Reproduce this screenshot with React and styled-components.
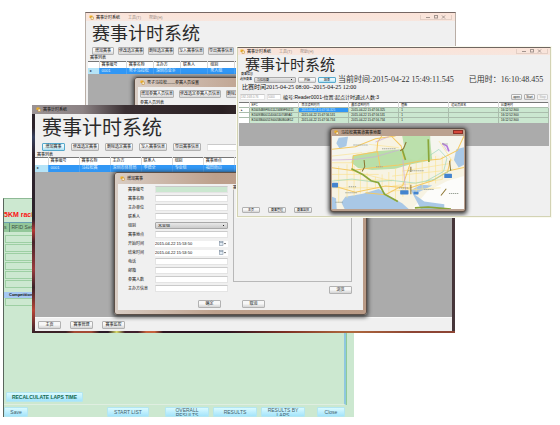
import React from "react";
import styled, { createGlobalStyle, css } from "styled-components";

const GlobalStyle = createGlobalStyle`
  * { box-sizing: border-box; }
  html, body { margin: 0; background: #fff; }
  body { font-family: "Liberation Sans", "Noto Sans CJK SC", sans-serif; font-size: 4px; line-height: 5px; color: #0c0c0c; }
  button, input, select { font: inherit; color: inherit; margin: 0; padding: 0; min-width: 0; }
  h1, h2, p { margin: 0; font-weight: 400; }
`;

const Desktop = styled.main`
  position: relative;
  min-height: 100vh;
  overflow: hidden;
`;

/* ---------- window chrome ---------- */

const Frame = styled.section`
  position: absolute;
  display: flex;
  flex-direction: column;
  overflow: hidden;
  background: #f0f0f0;
`;

const BackWindow = styled(Frame)`
  left: 85px;
  right: 104px;
  top: 12px;
  height: 96px;
  border: 1px solid #b9aea6;
  border-top-color: #766763;
  padding: 0 2px;
`;

const FrontWindow = styled(Frame)`
  left: 32px;
  right: 105px;
  top: 105px;
  height: 228px;
  padding: 0 3px 2px;
  background:
    linear-gradient(90deg, #3a2226 0 8%, #a34a34 10% 14%, #2b1b26 16% 18%, #d9dc6a 20%, #40202c 22% 25%, #c5613c 27% 29%, #2c1420 31% 46%, #7d3024 60%, #b06a3e 75%, #8d4534 90%) bottom / 100% 2px no-repeat,
    linear-gradient(180deg, #2b222a 0 10%, #37415e 14%, #2c222b 22% 50%, #b53733 55%, #47232a 60%, #9a3a3c 72%, #3b2228 80%, #b84436 90%, #37222a) left / 3px 100% no-repeat,
    #46363a;
`;

const RaceWindow = styled(Frame)`
  left: 237px;
  right: 9px;
  top: 47px;
  height: 170px;
  border: 1px solid #d3d3b4;
  border-top-color: #6f6660;
  padding: 0 1px;
  box-shadow: 0 0 0 1px #fafaf0;
`;

const TitleBar = styled.header`
  display: flex;
  align-items: center;
  gap: 2px;
  height: ${(p) => p.$h}px;
  flex: none;
  margin: 0 -3px;
  padding: 0 4px;
  background: ${(p) => (p.$dark ? "linear-gradient(90deg, #9a9294 0, #8b8284 12%, #3b3033 22%, #2a2023 45%, #3a2e30 52%, #241b1e)" : "linear-gradient(#fbe3d8, #f7e6de)")};
  white-space: nowrap;
`;

const Faint = styled.span`
  margin-left: 6px;
  color: #a08f88;
`;

const WindowButtons = styled.span`
  display: flex;
  align-items: center;
  gap: 4px;
  margin-left: auto;
  padding: 0 4px;
  border: 1px solid #e3cfc5;
  border-top: 0;
  color: #8d817c;
`;

const Client = styled.div`
  display: flex;
  flex: 1;
  flex-direction: column;
  min-height: 0;
  background: #f0f0f0;
`;

const Heading = styled.h1`
  font-family: "Noto Sans CJK SC", sans-serif;
  font-weight: 400;
  font-size: ${(p) => p.$size}px;
  line-height: ${(p) => p.$lh}px;
  padding-left: ${(p) => p.$pad}px;
  color: #2a2a2a;
  white-space: nowrap;
`;

const Toolbar = styled.div`
  display: flex;
  flex: none;
  align-items: center;
  gap: ${(p) => p.$gap}px;
  padding: ${(p) => p.$pad};
`;

const Button = styled.button`
  flex: none;
  width: ${(p) => p.$w}px;
  height: ${(p) => p.$h || 8}px;
  border: 1px solid #b2b2b2;
  border-radius: 1px;
  background: linear-gradient(#f7f7f7 45%, #d4d4d4);
  font-size: ${(p) => p.$fs || 4}px;
  line-height: 4px;
  text-align: center;
  white-space: nowrap;
  ${(p) => p.$active && css`border-color: #56a9cc; background: linear-gradient(#e9f7fc 45%, #a9def2);`}
  ${(p) => p.disabled && css`border-color: #d0d0d0; background: #f4f4f4; color: #aaa;`}
`;

const ListLabel = styled.h2`
  flex: none;
  font-size: ${(p) => p.$fs || 4}px;
  line-height: ${(p) => p.$lh}px;
  padding-left: 2px;
`;

const Workspace = styled.div`
  flex: ${(p) => (p.$h ? "none" : 1)};
  ${(p) => p.$h && css`height: ${p.$h}px;`}
  background: #ababab;
`;

const DataTable = styled.table`
  flex: none;
  width: 100%;
  table-layout: fixed;
  border-collapse: collapse;
  border-top: 1px solid #777;
  font-size: ${(p) => p.$fs || 4}px;
  line-height: 4px;
  background: #fff;
  th, td {
    height: ${(p) => p.$rh}px;
    padding: 0 2px;
    text-align: left;
    font-weight: 400;
    white-space: nowrap;
    border-right: 1px solid #d8d8d8;
  }
  th:first-child { width: ${(p) => p.$lead}px; }
`;

const SelectedRow = styled.tr`
  background: #3197f5;
  color: #e0f3ff;
  td { border-right-color: #4ba4f6; }
  td:first-child { background: #b5e4f8; color: #234; }
`;

const ReaderRow = styled.tr`
  background: #cbe7d0;
  border-top: 1px solid #aabdac;
  td { border-right-color: #aabdac; }
  td:first-child { background: #fff; }
`;

const PickedCell = styled.td`
  background: ${(p) => (p.$on ? "#3197f5" : "transparent")};
  color: ${(p) => (p.$on ? "#d5ecff" : "inherit")};
`;

const FooterBar = styled.footer`
  display: flex;
  flex: none;
  align-items: center;
  gap: ${(p) => p.$gap}px;
  height: 14px;
  padding-left: 3px;
  border-top: 1px solid #fafafa;
  background: #f0f0f0;
`;

const TextBox = styled.input`
  width: ${(p) => p.$w}px;
  height: ${(p) => p.$h || 7}px;
  border: 1px solid #e4e4e4;
  border-top-color: #cacaca;
  background: ${(p) => (p.$green ? "#cbe7d0" : "#fff")};
  color: ${(p) => (p.disabled ? "#999" : "#222")};
  font-size: ${(p) => p.$fs || 4}px;
`;

const Select = styled.select`
  appearance: none;
  width: ${(p) => p.$w}px;
  height: ${(p) => p.$h || 7}px;
  padding: 0 2px;
  border: 1px solid #a8a8a8;
  border-radius: 1px;
  font-size: ${(p) => p.$fs || 4}px;
  line-height: 4px;
  background:
    linear-gradient(135deg, #222 50%, transparent 50%) right 2px center / 2px 2px no-repeat,
    linear-gradient(#e8e8e8, #cbcbcb);
`;

/* ---------- dialogs ---------- */

const Dialog = styled.div`
  position: absolute;
  display: flex;
  flex-direction: column;
  padding: 0 3px 4px;
  border: 1px solid #5d5048;
  border-radius: 3px;
  background: linear-gradient(90deg, #d9cdc4, #bda08c 40%, #b99a86);
  box-shadow: 0 1px 4px 1px #333;
`;

const StaffDialog = styled(Dialog)`
  left: 48px;
  right: 20px;
  top: 64px;
  height: 60px;
`;

const AddDialog = styled(Dialog)`
  left: 82px;
  right: 88px;
  top: 67px;
`;

const MapDialog = styled(Dialog)`
  left: 92px;
  right: 84px;
  top: 80px;
  padding: 0 1px 2px;
  background: #baa18f;
`;

const DialogTitle = styled.div`
  display: flex;
  align-items: center;
  gap: 2px;
  height: ${(p) => p.$h}px;
  flex: none;
  padding-left: 2px;
  font-size: 4px;
  white-space: nowrap;
`;

const CloseBox = styled.button`
  width: 10px;
  height: 4px;
  margin: 0 1px 2px auto;
  border: 1px solid #8b2f28;
  background: #d5483b;
`;

const DialogBody = styled.div`
  display: grid;
  grid-template-columns: 105px 1fr;
  flex: 1;
  padding: 1px 11px 2px 10px;
  background: #f0f0f0;
`;

const StaffBody = styled(Client)`
  gap: 1px;
`;

const Form = styled.form`
  display: flex;
  flex-direction: column;
`;

const Field = styled.div`
  display: grid;
  grid-template-columns: 27px 73px;
  align-items: center;
  height: 9px;
`;

const DateBox = styled.div`
  display: flex;
  align-items: center;
  background: #fff;
  height: 6px;
  padding-right: 2px;
`;

const DateInput = styled.input`
  flex: 1;
  border: 0;
  background: transparent;
  height: 5px;
`;

const FormActions = styled.div`
  display: flex;
  grid-column: 1 / -1;
  gap: 21px;
  padding: 6px 0 0 70px;
`;

const Side = styled.div`
  display: flex;
  flex-direction: column;
  align-items: flex-end;
  gap: 4px;
`;

const Group = styled.fieldset`
  width: 100%;
  height: 97px;
  margin: 0;
  padding: 0;
  min-width: 0;
  border: 1px solid #b8b8b8;
  legend { padding: 0; margin-left: -1px; line-height: 5px; }
`;

/* ---------- race monitor ---------- */

const RaceRow = styled.div`
  display: flex;
  flex: none;
  align-items: center;
  gap: 2px;
  height: ${(p) => p.$h}px;
  padding: 0 1px;
  white-space: nowrap;
  font-size: 3px;
`;

const Clock = styled.time`
  font-family: "Liberation Serif", "Noto Sans CJK SC", serif;
  font-size: 8px;
  line-height: 9px;
  color: #333;
  margin-left: ${(p) => p.$ml}px;
`;

const Schedule = styled.p`
  font-family: "Liberation Serif", "Noto Sans CJK SC", serif;
  flex: none;
  font-size: 6px;
  line-height: 8px;
  padding-left: 3px;
  white-space: nowrap;
`;

const ReaderInfo = styled.span`
  flex: 1;
  font-size: 5px;
  line-height: 6px;
`;

const RaceFooter = styled.footer`
  display: flex;
  gap: 8px;
  margin-top: auto;
  padding: 0 0 3px 3px;
`;

const MapSvg = styled.svg`
  display: block;
  width: 100%;
  height: auto;
`;

/* ---------- lap results ---------- */

const LapWindow = styled(Frame)`
  left: 3px;
  right: 206px;
  top: 198px;
  height: 219px;
  border-left: 1px solid #59655c;
  border-top: 1px solid #8fba96;
  background: #cce8d0;
`;

const LapTitle = styled.h1`
  color: #fb1111;
  font-weight: 700;
  font-size: 7px;
  line-height: 10px;
  padding-top: 11px;
  height: 23px;
  white-space: nowrap;
`;

const Tabs = styled.nav`
  display: flex;
  flex: none;
  height: 10px;
  margin-bottom: 3px;
  background: #86b98e;
  border-top: 1px solid #6a9fb0;
`;

const Tab = styled.button`
  border: 0;
  border-right: 1px solid #628d78;
  background: #93c79a;
  color: #3c5143;
  font-size: 5px;
  padding: 0 2px 0 ${(p) => p.$pl}px;
`;

const LapLine = styled.div`
  flex: none;
  height: 8px;
  margin: 0 16px 1px 1px;
  border: 1px solid #9dcfa3;
`;

const LapHead = styled.div`
  flex: none;
  height: 6px;
  margin-top: 3px;
  margin-right: 16px;
  padding-left: 5px;
  background: #a5c8f3;
  font-weight: 700;
`;

const LapBody = styled.div`
  display: flex;
  flex-direction: column;
  flex: 1;
  margin-right: 8px;
  border-right: 2px solid #8fc7de;
  border-bottom: 1px solid #dfeee1;
  box-shadow: 1px 0 #8fca98;
`;

const LapSpacer = styled.div`
  flex: 1;
`;

const AquaButton = styled.button`
  flex: none;
  width: ${(p) => p.$w}px;
  height: 10px;
  margin-left: ${(p) => p.$ml || 0}px;
  border: 1px solid #b3e6f1;
  border-radius: 1px;
  background: linear-gradient(#dafaff, #a4e4fb);
  color: ${(p) => (p.$strong ? "#12684f" : "#41606a")};
  font-size: 5px;
  font-weight: ${(p) => (p.$strong ? 700 : 400)};
  line-height: 5px;
  overflow: hidden;
`;

const TwoLine = styled.span`
  display: block;
  height: 8px;
  padding: 0 2px;
  overflow: hidden;
`;

const LapFooter = styled.footer`
  display: flex;
  flex: none;
  height: 12px;
  padding-top: 2px;
`;

const FormIcon = () => (
  <svg width="5" height="5" viewBox="0 0 10 10" aria-hidden="true">
    <rect x="1" y="1" width="6" height="5" fill="#f0b429" />
    <rect x="4" y="4" width="5" height="5" fill="#fff3c4" stroke="#b5792c" />
  </svg>
);

const CalendarIcon = () => (
  <svg width="7" height="5" viewBox="0 0 14 10" aria-hidden="true">
    <rect x="1" y="1" width="7" height="8" fill="#e4edf5" stroke="#6d7f92" />
    <path d="M1 3h7" stroke="#6d7f92" />
    <path d="M10 4h4l-2 3z" fill="#444" />
  </svg>
);

const MinMaxClose = () => (
  <WindowButtons>
    <svg width="22" height="4" viewBox="0 0 22 4" aria-hidden="true" fill="none" stroke="#a3958f">
      <path d="M1 2.5h4M17 .5l3 3m0-3l-3 3" />
      <rect x="9.500" y=".5" width="3" height="2.500" />
    </svg>
  </WindowButtons>
);

function CityMap() {
  return (
    <MapSvg viewBox="0 0 395 219" role="img" aria-label="赛道地图">
      <rect width="395" height="219" fill="#f7f3e3" />
      <path d="M0 0h150l-30 40-60 20-60 20zM280 0h115v50l-60 20-40-30z" fill="#f5f5ef" />
      <path d="M285 165l60-30 50-15v99H240z" fill="#fcfcfa" />
      <path d="M62 58l70-12 78-6 14-28 30-12h38l8 72-70 14-40 12-70 4-42-6-20-16z" fill="#b9dfa8" />
      <path d="M210 0h84v40l-40 34-32-10z" fill="#bbe0ac" />
      <path d="M20 5l28-3-5 28-20 8-10-16zM0 182l12 4 2 33H0zM40 182l52-9 48-14 34 22 36 20 20 18H38l-10-20zM372 40l23-6v52l-16 8-14-22zM236 162l30-16 34 2-24 12-30 14 30 22 60 8v15h-70z" fill="#a9c8e6" />
      <g fill="none" stroke="#fae391" strokeWidth="2">
        <path d="M0 80h60M0 115h140M5 132h180M0 155h150M20 90v110M45 85v100M66 90v90M85 100v72M105 110v60M130 122v36M150 115v45M170 108v70M190 96v100M212 92v90M232 90v70M252 80v90M270 75v85M290 70v80M310 60v82M330 60v70M60 105l120 30M180 120l170-18M180 150l150-20M175 165l150-10M210 105l140-22M0 60l90-10M110 25l90 10M320 15l40 60" />
      </g>
      <g fill="none" stroke="#f4c963" strokeWidth="3">
        <path d="M0 95l60 8 60-8 80-8 65-12 60-6 50-26 20-43" />
        <path d="M0 148l70 20 90-18 70 6 70-22 50-30 45-10" />
        <path d="M60 103l4-44 70-12 3-30 12-17M136 45l8 48M215 70l-8-40-30-30" />
        <path d="M100 170l60 6 52-28 22-66M0 40l70-8 60-24 60-8M345 110l10-40" />
      </g>
      <g fill="none" stroke="#9bd6ba" strokeWidth="2">
        <path d="M0 135l60-6 60 8 60-4 70 8 60-12 50-30" />
        <path d="M290 60l30-20 24 26-10 40-54 30" />
      </g>
      <g fill="none" stroke="#cdaadb" strokeWidth="2">
        <path d="M0 72l70-2 60-8 70-20M212 70l8 92M130 18l40-16M330 22l14 22" />
      </g>
      <g fill="none" stroke="#8aa63a" strokeWidth="5">
        <path d="M58 98l35 18 24 18 22 6 18 34 40 22M210 40l10 32M288 10l2 68M248 215l40-2 68 6" />
      </g>
      <g fill="none" stroke="#8b7430" strokeWidth="3">
        <path d="M96 72l2 20-8 14M222 18l-8 20-10 6M236 92v16M236 146v28M352 74l3 30M342 158l-16 20" />
      </g>
      <path d="M330 22l14 8 6 16" fill="none" stroke="#b477dc" strokeWidth="5" />
      <g fill="#4384ce">
        <rect x="0" y="140" width="18" height="14" rx="2" />
        <rect x="204" y="162" width="25" height="13" rx="2" />
        <rect x="336" y="113" width="23" height="13" rx="2" />
        <rect x="244" y="167" width="15" height="8" rx="2" />
      </g>
      <g fill="none" stroke="#9aa297" strokeWidth="3" strokeDasharray="4 2">
        <path d="M64 27h44M150 38h42M50 152h22M228 104h48M132 92h20M276 160h30M350 172h30M40 170h36M200 156h30M330 24h18M10 198h24" />
      </g>
    </MapSvg>
  );
}

const fields = [
  ["code", "赛事编号", "green"], ["name", "赛事名称"], ["unit", "主办单位"], ["contact", "联系人"],
  ["group", "组别", "select"], ["place", "赛事地点"], ["start", "开始时间", "date"], ["end", "结束时间", "date"],
  ["phone", "电话"], ["mail", "邮箱"], ["count", "参赛人数"], ["info", "主办方信息"],
];

const readings = [
  ["E20034B9F80111234B9F80111", "2015-04-22 15:47:56.325", "2015-04-22 15:47:56.325"],
  ["E20093B0011400011070B9A1", "2015-04-22 15:47:56.531", "2015-04-22 15:47:56.531"],
  ["E2003B0005190005B0B00E52", "2015-04-22 15:47:56.734", "2015-04-22 15:47:56.734"],
];

function FieldControl({ id, kind }) {
  if (kind === "select") return <Select id={id} $w={73}><option>未业组</option></Select>;
  if (kind === "date") {
    return <DateBox><DateInput id={id} defaultValue="2015-04-22 15:53:50" /><CalendarIcon /></DateBox>;
  }
  return <TextBox id={id} $w={73} $green={kind === "green"} />;
}

function EventTable({ heads, cells, rh, lead }) {
  return (
    <DataTable $rh={rh} $lead={lead}>
      <thead><tr><th />{heads.map((h) => <th key={h}>{h}</th>)}</tr></thead>
      <tbody><SelectedRow><td>▸</td>{cells.map((c, i) => <td key={i}>{c}</td>)}</SelectedRow></tbody>
    </DataTable>
  );
}

function EventList() {
  return (
    <BackWindow>
      <TitleBar $h={8}><FormIcon />赛事计时系统<Faint>工具(T)</Faint><Faint>帮助(H)</Faint><MinMaxClose /></TitleBar>
      <Client>
        <Heading $size={18} $lh={23} $pad={4}>赛事计时系统</Heading>
        <Toolbar $gap={4} $pad="3px 4px 0">
          <Button $w={22}>增加赛事</Button>
          <Button $w={26}>修改选定赛事</Button>
          <Button $w={26}>删除选定赛事</Button>
          <Button $w={26}>写入赛事信息</Button>
          <Button $w={26}>导出赛事信息</Button>
        </Toolbar>
        <ListLabel $lh={6}>赛事列表</ListLabel>
        <EventTable
          rh={6}
          lead={11}
          heads={["赛事编号", "赛事名称", "主办方", "联系人", "组别", "赛事地点", "开始时间", "结束时间", "电话", "邮箱", "参赛人数", "信息", "备注"]}
          cells={["0001", "男子马拉松", "深圳市业余", "", "男人组", "", "", "", "", "", "", "", ""]}
        />
        <Workspace />
      </Client>
      <StaffDialog>
        <DialogTitle $h={9}><FormIcon />男子马拉松——参赛人员设置</DialogTitle>
        <StaffBody>
          <Toolbar $gap={5} $pad="3px 2px 1px">
            <Button $w={34}>增加参赛人员信息</Button>
            <Button $w={42}>修改选定参赛人员信息</Button>
            <Button $w={42}>删除选定参赛人员信息</Button>
          </Toolbar>
          <ListLabel $lh={6}>参赛人员列表</ListLabel>
        </StaffBody>
      </StaffDialog>
    </BackWindow>
  );
}

function EventEditor() {
  return (
    <FrontWindow>
      <TitleBar $dark $h={9}><FormIcon />赛事计时系统</TitleBar>
      <Client>
        <Heading $size={20} $lh={26} $pad={7}>赛事计时系统</Heading>
        <Toolbar $gap={6} $pad="3px 7px 1px">
          <Button $w={23} $active>增加赛事</Button>
          <Button $w={28}>修改选定赛事</Button>
          <Button $w={28}>删除选定赛事</Button>
          <Button $w={28}>写入赛事信息</Button>
          <Button $w={28}>导出赛事信息</Button>
          <TextBox $w={60} aria-label="搜索" />
        </Toolbar>
        <ListLabel $lh={5}>赛事列表</ListLabel>
        <EventTable
          rh={7}
          lead={13}
          heads={["赛事编号", "赛事名称", "主办方", "联系人", "组别", "赛事地点", "开始时间", "结束时间", "电话", "邮箱", "参赛人数", "信息", "备注"]}
          cells={["0001", "马拉松赛", "深圳市体育局", "李德全", "专业组", "福田南山", "2015", "", "", "", "", "", ""]}
        />
        <Workspace />
        <FooterBar $gap={9}>
          <Button $w={23}>主页</Button>
          <Button $w={23}>赛事管理</Button>
          <Button $w={23}>赛事监控</Button>
        </FooterBar>
      </Client>
      <AddDialog>
        <DialogTitle $h={11}><FormIcon />增加赛事</DialogTitle>
        <DialogBody>
          <Form>
            {fields.map(([id, label, kind]) => (
              <Field key={id}>
                <label htmlFor={id}>{label}</label>
                <FieldControl id={id} kind={kind} />
              </Field>
            ))}
          </Form>
          <Side>
            <Group><legend>赛事图片</legend></Group>
            <Button $w={23}>浏览</Button>
          </Side>
          <FormActions>
            <Button $w={23}>确定</Button>
            <Button $w={23}>取消</Button>
          </FormActions>
        </DialogBody>
      </AddDialog>
    </FrontWindow>
  );
}

function RaceMonitor() {
  return (
    <RaceWindow>
      <TitleBar $h={7}><FormIcon />赛事计时系统<Faint>工具(T)</Faint><Faint>帮助(H)</Faint><MinMaxClose /></TitleBar>
      <Client>
        <Heading $size={15} $lh={18} $pad={6}>赛事计时系统</Heading>
        <ListLabel $lh={3} $fs={3}>赛事信息</ListLabel>
        <RaceRow $h={7}>
          <label htmlFor="race">选择赛事</label>
          <Select id="race" $w={42} $h={6} $fs={3}><option>马拉松赛</option></Select>
          <Button $w={18} $h={6} $fs={3}>开始</Button>
          <Button $w={18} $h={6} $fs={3} $active>结束</Button>
          <Clock $ml={0}>当前时间:2015-04-22 15:49:11.545</Clock>
          <Clock $ml={13}>已用时：16:10:48.455</Clock>
        </RaceRow>
        <Schedule>比赛时间2015-04-25 08:00--2015-04-25 12:00</Schedule>
        <RaceRow $h={11}>
          <TextBox $w={25} $h={6} $fs={3} disabled defaultValue="192.168.0.76" aria-label="IP" />
          <TextBox $w={14} $h={6} $fs={3} disabled defaultValue="5000" aria-label="端口" />
          <ReaderInfo>编号:Reader0001-位置:起点计时通过人数:3</ReaderInfo>
          <Button $w={11} $h={6} $fs={3}>open</Button>
          <Button $w={11} $h={6} $fs={3}>Start</Button>
          <Button $w={11} $h={6} $fs={3} disabled>Stop</Button>
        </RaceRow>
        <DataTable $rh={5} $lead={10} $fs={3}>
          <thead>
            <tr><th /><th>EPC</th><th>首次读到时间</th><th>最后读到时间</th><th>圈数</th><th>运动员姓名</th><th>比赛用时</th></tr>
          </thead>
          <tbody>
            {readings.map(([epc, first, last], i) => (
              <ReaderRow key={epc}>
                <td>{i === 0 ? "▸" : ""}</td>
                <td>{epc}</td>
                <PickedCell $on={i === 0}>{first}</PickedCell>
                <td>{last}</td>
                <td>1</td>
                <td />
                <td>16:12:52.900</td>
              </ReaderRow>
            ))}
          </tbody>
        </DataTable>
        <Workspace $h={23} />
        <RaceFooter>
          <Button $w={18} $h={6} $fs={3}>主页</Button>
          <Button $w={18} $h={6} $fs={3}>赛事管理</Button>
          <Button $w={18} $h={6} $fs={3}>赛事监控</Button>
        </RaceFooter>
      </Client>
      <MapDialog>
        <DialogTitle $h={7}><FormIcon />马拉松赛赛道赛事地图<CloseBox aria-label="关闭" /></DialogTitle>
        <CityMap />
      </MapDialog>
    </RaceWindow>
  );
}

function LapResults() {
  return (
    <LapWindow>
      <LapTitle>5KM racing</LapTitle>
      <Tabs><Tab $pl={0}>s</Tab><Tab $pl={2}>RFID Settings</Tab></Tabs>
      <LapBody>
        {[0, 1, 2, 3, 4, 5].map((n) => <LapLine key={n} />)}
        <LapHead>Competition</LapHead>
        <LapLine />
        <LapSpacer />
        <AquaButton $w={77} $ml={2} $strong>RECALCULATE LAPS TIME</AquaButton>
        <Toolbar $gap={0} $pad="1px" />
      </LapBody>
      <LapFooter>
        <AquaButton $w={24}>Save</AquaButton>
        <AquaButton $w={42} $ml={79}>START LIST</AquaButton>
        <AquaButton $w={44} $ml={16}><TwoLine>OVERALL RESULTS</TwoLine></AquaButton>
        <AquaButton $w={44} $ml={4}>RESULTS</AquaButton>
        <AquaButton $w={44} $ml={4}><TwoLine>RESULTS BY LAPS</TwoLine></AquaButton>
        <AquaButton $w={28} $ml={12}>Close</AquaButton>
      </LapFooter>
    </LapWindow>
  );
}

export default function App() {
  return (
    <>
      <GlobalStyle />
      <Desktop>
        <LapResults />
        <EventList />
        <EventEditor />
        <RaceMonitor />
      </Desktop>
    </>
  );
}
